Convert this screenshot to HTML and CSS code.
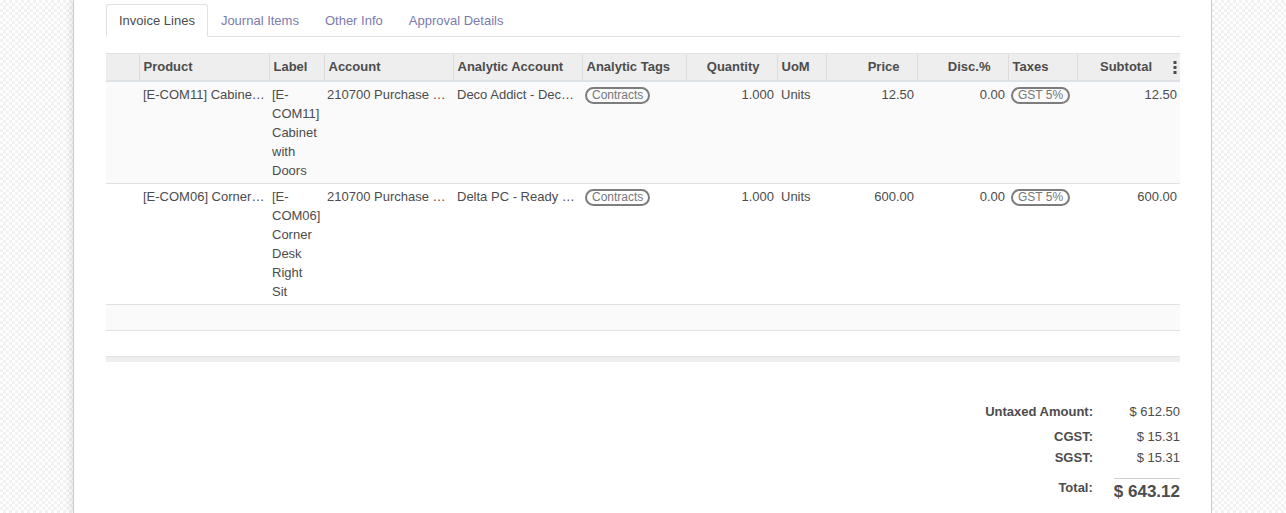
FILE: index.html
```html
<!DOCTYPE html>
<html>
<head>
<meta charset="utf-8">
<link rel="stylesheet" href="styles.css">
</head>
<body>
<div class="sheet">
  <ul class="tabs">
    <li class="tab active">Invoice Lines</li>
    <li class="tab">Journal Items</li>
    <li class="tab">Other Info</li>
    <li class="tab">Approval Details</li>
  </ul>

  <table class="lines">
    <colgroup>
      <col style="width:33px"><col style="width:130px"><col style="width:55px"><col style="width:129px">
      <col style="width:129px"><col style="width:104px"><col style="width:91px"><col style="width:49px">
      <col style="width:91px"><col style="width:91px"><col style="width:69px"><col style="width:103px">
    </colgroup>
    <thead>
      <tr>
        <th class="handle"></th>
        <th>Product</th>
        <th>Label</th>
        <th>Account</th>
        <th>Analytic Account</th>
        <th>Analytic Tags</th>
        <th class="num">Quantity</th>
        <th>UoM</th>
        <th class="num">Price</th>
        <th class="num">Disc.%</th>
        <th>Taxes</th>
        <th class="num last">Subtotal
          <svg class="kebab" width="4" height="13" viewBox="0 0 4 13"><rect x="0.5" y="0" width="3" height="3"/><rect x="0.5" y="5" width="3" height="3"/><rect x="0.5" y="10" width="3" height="3"/></svg>
        </th>
      </tr>
    </thead>
    <tbody>
      <tr class="odd">
        <td></td>
        <td class="clip">[E-COM11] Cabinet with Doors</td>
        <td class="wrap">[E-COM11] Cabinet with Doors</td>
        <td class="clip acc">210700 Purchase Expense</td>
        <td class="clip">Deco Addict - Deco Addict</td>
        <td><span class="badge">Contracts</span></td>
        <td class="nr">1.000</td>
        <td>Units</td>
        <td class="nr">12.50</td>
        <td class="nr">0.00</td>
        <td><span class="badge">GST 5%</span></td>
        <td class="nr">12.50</td>
      </tr>
      <tr>
        <td></td>
        <td class="clip">[E-COM06] Corner Desk Right Sit</td>
        <td class="wrap">[E-COM06] Corner Desk Right Sit</td>
        <td class="clip acc">210700 Purchase Expense</td>
        <td class="clip">Delta PC - Ready Mat</td>
        <td><span class="badge">Contracts</span></td>
        <td class="nr">1.000</td>
        <td>Units</td>
        <td class="nr">600.00</td>
        <td class="nr">0.00</td>
        <td><span class="badge">GST 5%</span></td>
        <td class="nr">600.00</td>
      </tr>
      <tr class="odd empty"><td colspan="12"></td></tr>
      <tr class="empty"><td colspan="12"></td></tr>
    </tbody>
    <tfoot>
      <tr><td colspan="12"></td></tr>
    </tfoot>
  </table>

  <div class="totals">
    <div class="trow first"><span class="tlabel">Untaxed Amount:</span><span class="tval">$ 612.50</span></div>
    <div class="trow"><span class="tlabel">CGST:</span><span class="tval">$ 15.31</span></div>
    <div class="trow"><span class="tlabel">SGST:</span><span class="tval">$ 15.31</span></div>
    <div class="trow total"><span class="tlabel">Total:</span><span class="tval">$ 643.12</span></div>
  </div>
</div>
</body>
</html>
```

FILE: styles.css
```css
html, body {
  margin: 0;
  padding: 0;
}
body {
  font-family: "Liberation Sans", Arial, sans-serif;
  font-size: 13px;
  line-height: 19px;
  color: #4c4c4c;
  background-color: #fff;
  background-image: repeating-conic-gradient(#f1f1f1 0 25%, #ffffff 0 50%);
  background-size: 6px 6px;
  height: 513px;
  overflow: hidden;
}
.sheet {
  box-sizing: border-box;
  width: 1139px;
  margin: 0 0 0 73px;
  min-height: 513px;
  background: #fff;
  border-left: 1px solid #c9c8d4;
  border-right: 1px solid #c9c8d4;
  box-shadow: -3px 0 6px rgba(0, 0, 0, 0.08);
  padding: 4px 31px 0 32px;
}
.tabs {
  list-style: none;
  margin: 0;
  padding: 0;
  display: flex;
  border-bottom: 1px solid #dee2e6;
}
.tab {
  padding: 6px 12px;
  border: 1px solid transparent;
  border-radius: 3px 3px 0 0;
  margin-bottom: -1px;
  color: #7c7bad;
}
.tab.active {
  color: #4c4c4c;
  border-color: #dee2e6 #dee2e6 #fff;
  background: #fff;
}
.lines {
  width: 1074px;
  margin-top: 16px;
  table-layout: fixed;
  border-collapse: collapse;
}
.lines th {
  background: #eeeeee;
  font-weight: bold;
  text-align: left;
  padding: 3px 4px 4px;
  border-top: 1px solid #e2e2e2;
  border-left: 1px solid #dcdcdc;
  border-bottom: 2px solid #dee2e6;
  white-space: nowrap;
  overflow: hidden;
  height: 19px;
}
.lines th.handle {
  border-left: none;
}
.lines th.num {
  text-align: right;
  padding-right: 17px;
}
.lines th.last {
  position: relative;
  padding-right: 28px;
  overflow: visible;
}
.kebab {
  position: absolute;
  right: 3px;
  top: 7px;
  fill: #4c4c4c;
}
.lines td {
  padding: 3px 4px;
  vertical-align: top;
  border-bottom: 1px solid #dee2e6;
  height: 19px;
}
.lines tbody tr.odd td {
  background: #fafafa;
}
.lines td.clip {
  white-space: nowrap;
  overflow: hidden;
  text-overflow: ellipsis;
}
.lines td.acc {
  padding-left: 3px;
}
.lines td.wrap {
  padding-left: 3px;
  padding-right: 4px;
}
.lines td.nr {
  text-align: right;
  padding-right: 3px;
}
.badge {
  display: inline-block;
  box-sizing: border-box;
  height: 17px;
  line-height: 13px;
  font-size: 12px;
  padding: 0 5px;
  border: 2px solid #7d7d7d;
  border-radius: 9px;
  color: #777;
  vertical-align: top;
  margin-top: 2px;
  margin-left: -1px;
  white-space: nowrap;
}
.lines tfoot td {
  height: 5px;
  padding: 0;
  background: #eeeeee;
  border-top: 1px solid #dee2e6;
  border-bottom: none;
}
.totals {
  display: flex;
  flex-direction: column;
  align-items: flex-end;
  margin-top: 39px;
}
.trow {
  display: flex;
  align-items: flex-start;
  line-height: 21px;
}
.trow.first {
  padding-bottom: 4px;
}
.tlabel {
  font-weight: bold;
  text-align: right;
  white-space: nowrap;
}
.tval {
  min-width: 66px;
  margin-left: 21px;
  text-align: right;
  white-space: nowrap;
}
.trow.total {
  margin-top: 10px;
}
.trow.total .tlabel {
  line-height: 19px;
}
.trow.total .tval {
  border-top: 1px solid #cfcfcf;
  font-size: 17px;
  font-weight: bold;
  line-height: 26px;
}
```
